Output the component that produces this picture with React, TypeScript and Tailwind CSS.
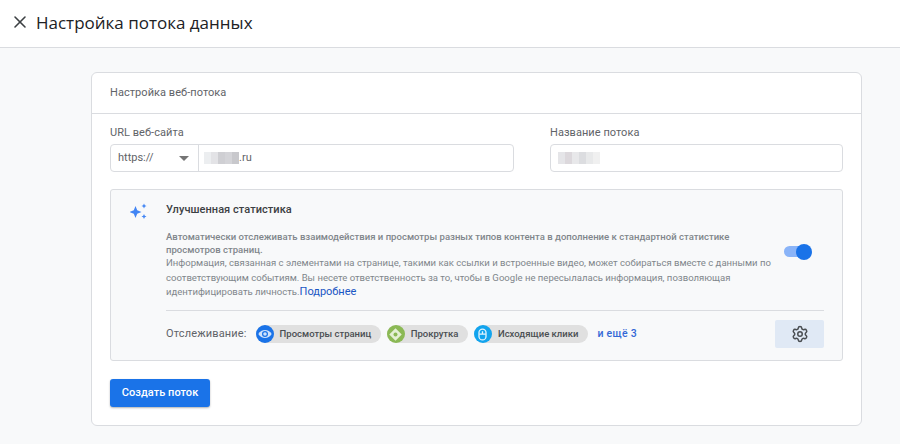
import React from "react";
import { X, Settings } from "lucide-react";

const Blur = ({ cells }: { cells: string[] }) => (
  <div className="flex h-[12px]">
    {cells.map((c, i) => (
      <div key={i} className="w-[7px] h-full" style={{ backgroundColor: c }} />
    ))}
  </div>
);

const Chip = ({
  label,
  color,
  children,
}: {
  label: string;
  color: string;
  children: React.ReactNode;
}) => (
  <div className="flex items-center h-[18px] rounded-full bg-[#e0e0e0] pr-[10px]">
    <div
      className="w-[18px] h-[18px] rounded-full flex items-center justify-center"
      style={{ backgroundColor: color }}
    >
      {children}
    </div>
    <span className="ml-[6px] text-[9.5px] font-medium text-[#4a4e52]">
      {label}
    </span>
  </div>
);

export default function App() {
  return (
    <div className="h-[444px] overflow-hidden bg-[#f8f9fa] font-['Roboto',sans-serif]">
      <header className="h-[48px] bg-white border-b border-[#dadce0] flex items-center pl-[10px] pb-[3px]">
        <X className="w-[20px] h-[20px] text-[#3c4043]" strokeWidth={1.9} />
        <h1 className="ml-[6px] text-[17px] text-[#202124] font-['Open_Sans',sans-serif] font-normal leading-none">
          Настройка потока данных
        </h1>
      </header>

      <div className="ml-[91px] mr-[38px] mt-[24px] h-[354px] bg-white border border-[#dadce0] rounded-[6px]">
        <div className="h-[41px] border-b border-[#dadce0] flex items-center pl-[18px] text-[11px] text-[#5f6368] tracking-[0.05px]">
          Настройка веб-потока
        </div>

        <div className="px-[18px]">
          <div className="flex gap-[36px] pt-[12px]">
            <div className="w-[404px]">
              <div className="text-[11px] text-[#5f6368] tracking-[0.05px] leading-[13px]">URL веб-сайта</div>
              <div className="mt-[5px] h-[28px] flex border border-[#dadce0] rounded-[4px] bg-white">
                <div className="w-[88px] border-r border-[#dadce0] flex items-center justify-between pl-[7px] pr-[9px] text-[11px] text-[#5f6368]">
                  <span>https://</span>
                  <span className="w-0 h-0 border-x-[5px] border-x-transparent border-t-[5px] border-t-[#757575]" />
                </div>
                <div className="flex items-center pl-[5px] text-[11px] text-[#5f6368]">
                  <Blur cells={["#eceef0", "#e3e3e6", "#cfcfd3", "#d4d4d8", "#c8c8cc"]} />
                  <span>.ru</span>
                </div>
              </div>
            </div>
            <div className="w-[293px]">
              <div className="text-[11px] text-[#5f6368] tracking-[0.05px] leading-[13px]">Название потока</div>
              <div className="mt-[5px] h-[28px] flex items-center pl-[7px] border border-[#dadce0] rounded-[4px] bg-white">
                <Blur cells={["#e5e5e8", "#dcd8dc", "#e8e8ea", "#dcdde0", "#e8e9ea", "#f0f0f0"]} />
              </div>
            </div>
          </div>

          <section className="mt-[17px] h-[172px] bg-[#f8f9fa] border border-[#dadce0] rounded-[3px] flex">
            <div className="w-[55px] shrink-0 pl-[19px] pt-[13px]">
              <svg viewBox="0 0 18 18" className="w-[18px] h-[18px]" fill="#4285f4">
                <path d="M5.5 3 7.2 7.3 11.5 9 7.2 10.7 5.5 15 3.8 10.7 -.5 9 3.8 7.3Z" />
                <path d="M14 .5 14.8 2.2 16.5 3 14.8 3.8 14 5.5 13.2 3.8 11.5 3 13.2 2.2Z" />
                <path d="M14 11 14.8 12.7 16.5 13.5 14.8 14.3 14 16 13.2 14.3 11.5 13.5 13.2 12.7Z" />
              </svg>
            </div>
            <div className="flex-1 pr-[18px]">
              <div className="pt-[13px] text-[11px] leading-[14px] font-medium text-[#3c4043] tracking-[0.05px]">
                Улучшенная статистика
              </div>
              <div className="flex mt-[12px] h-[82px]">
                <div className="w-[612px] pt-[1px] text-[9.55px] text-[#80868b] whitespace-nowrap">
                  <p className="leading-[13px] font-medium">
                    Автоматически отслеживать взаимодействия и просмотры разных типов контента в дополнение к стандартной статистике
                    <br />
                    просмотров страниц.
                  </p>
                  <p className="leading-[14.5px] text-[#80868b]">
                    Информация, связанная с элементами на странице, такими как ссылки и встроенные видео, может собираться вместе с данными по
                    <br />
                    соответствующим событиям. Вы несете ответственность за то, чтобы в Google не пересылалась информация, позволяющая
                    <br />
                    идентифицировать личность.
                    <span className="text-[11px] text-[#1a56c4]">Подробнее</span>
                  </p>
                </div>
                <div className="relative ml-[6px] mt-[15px] w-[28px] h-[16px]">
                  <div className="absolute left-0 top-[2px] w-[26px] h-[11px] rounded-full bg-[#8ab4f8]" />
                  <div className="absolute right-0 top-0 w-[16px] h-[16px] rounded-full bg-[#1a73e8]" />
                </div>
              </div>
              <div className="border-t border-[#dadce0] mt-[-1px] pt-[9px] flex items-center h-[38px]">
                <span className="text-[11px] text-[#5f6368] tracking-[0.15px] mr-[9px]">Отслеживание:</span>
                <div className="flex items-center gap-[5.5px]">
                  <Chip label="Просмотры страниц" color="#1a73e8">
                    <svg viewBox="0 0 18 18" className="w-[16px] h-[16px]">
                      <path d="M1.5 9C3.2 6 6 4.5 9 4.5S14.8 6 16.5 9C14.8 12 12 13.5 9 13.5S3.2 12 1.5 9Z" fill="#cfe2fc" />
                      <circle cx="9" cy="9" r="3.4" fill="#1a73e8" />
                      <circle cx="9" cy="9" r="2" fill="#cfe2fc" />
                    </svg>
                  </Chip>
                  <Chip label="Прокрутка" color="#8bb955">
                    <svg viewBox="0 0 18 18" className="w-[15px] h-[15px]">
                      <path d="M9 1.5 16.5 9 9 16.5 1.5 9Z" fill="#e4f0d4" />
                      <circle cx="9" cy="9" r="2.4" fill="#8bb955" />
                    </svg>
                  </Chip>
                  <Chip label="Исходящие клики" color="#12a4ee">
                    <svg viewBox="0 0 18 18" className="w-[15px] h-[15px]" fill="none" stroke="#e3f4fe" strokeWidth="1.6">
                      <rect x="4.8" y="2.5" width="8.4" height="13" rx="4.2" />
                      <path d="M9 5v3M5 8.5h8" />
                    </svg>
                  </Chip>
                </div>
                <span className="ml-[9px] text-[10.5px] font-medium text-[#3367d6] tracking-[0.3px]">и ещё 3</span>
                <button className="ml-auto w-[49px] h-[28px] rounded-[2px] bg-[#e0e9f5] flex items-center justify-center">
                  <Settings className="w-[18px] h-[18px] text-[#4a4e52]" strokeWidth={2} />
                </button>
              </div>
            </div>
          </section>

          <button className="mt-[18px] w-[100px] h-[28px] rounded-[3px] bg-[#1a73e8] text-white text-[11px] font-medium tracking-[0.05px] shadow-[0_1px_2px_rgba(60,64,67,0.4)]">
            Создать поток
          </button>
        </div>
      </div>
    </div>
  );
}
